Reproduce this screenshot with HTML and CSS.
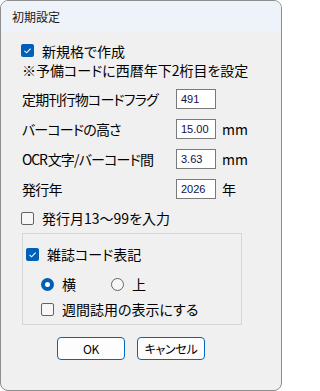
FILE: index.html
```html
<!DOCTYPE html>
<html lang="ja">
<head>
<meta charset="utf-8">
<link rel="stylesheet" href="styles.css">
</head>
<body>
<div class="window">
  <div class="titlebar">初期設定</div>
  <div class="content">
    <div class="row r-new">
      <span class="check on"><svg viewBox="0 0 13 13" width="13" height="13"><path d="M3.5 6.8 L5.6 8.8 L9.6 4.6" fill="none" stroke="#fff" stroke-width="1.1"/></svg></span>
      <span class="lbl">新規格で作成</span>
    </div>
    <div class="row r-note">※予備コードに西暦年下2桁目を設定</div>
    <div class="field first">
      <span class="flabel">定期刊行物コードフラグ</span>
      <span class="input">491</span>
    </div>
    <div class="field">
      <span class="flabel">バーコードの高さ</span>
      <span class="input">15.00</span>
      <span class="unit">mm</span>
    </div>
    <div class="field">
      <span class="flabel"><span class="latin">OCR</span>文字/バーコード間</span>
      <span class="input">3.63</span>
      <span class="unit">mm</span>
    </div>
    <div class="field">
      <span class="flabel">発行年</span>
      <span class="input">2026</span>
      <span class="unit">年</span>
    </div>
    <div class="row r-month">
      <span class="check"></span>
      <span class="lbl">発行月13〜99を入力</span>
    </div>
    <div class="group">
      <div class="row g-head">
        <span class="check on"><svg viewBox="0 0 13 13" width="13" height="13"><path d="M3.5 6.8 L5.6 8.8 L9.6 4.6" fill="none" stroke="#fff" stroke-width="1.1"/></svg></span>
        <span class="lbl">雑誌コード表記</span>
      </div>
      <div class="row g-radio">
        <span class="opt"><span class="radio on"></span><span class="lbl">横</span></span>
        <span class="opt"><span class="radio"></span><span class="lbl">上</span></span>
      </div>
      <div class="row g-week">
        <span class="check"></span>
        <span class="lbl">週間誌用の表示にする</span>
      </div>
    </div>
    <div class="buttons">
      <button class="btn">OK</button>
      <button class="btn">キャンセル</button>
    </div>
  </div>
</div>
</body>
</html>
```

FILE: styles.css
```css
html, body {
  margin: 0;
  padding: 0;
  background: #ffffff;
}
body {
  font-family: "Noto Sans CJK JP", "Noto Sans", sans-serif;
  font-feature-settings: "palt";
  color: #000;
}
.window {
  width: 282px;
  height: 391px;
  box-sizing: border-box;
  border: 1px solid #8e8e8e;
  border-radius: 8px;
  background: #f0f0f0;
  overflow: hidden;
}
.titlebar {
  height: 31px;
  line-height: 31px;
  background: #eef3f9;
  padding-left: 11px;
  font-size: 12px;
  color: #1a1a1a;
}
.content {
  padding-left: 20px;
  display: flex;
  flex-direction: column;
  align-items: flex-start;
}
.row {
  display: flex;
  align-items: center;
  font-size: 14px;
}
.r-new {
  margin-top: 8px;
  height: 21px;
}
.r-note {
  height: 18px;
  padding-left: 1px;
}
.field {
  display: flex;
  align-items: center;
  height: 20px;
  margin-top: 10px;
  font-size: 14px;
}
.field.first {
  margin-top: 10px;
}
.flabel {
  width: 155px;
  padding-left: 1px;
  box-sizing: border-box;
  letter-spacing: -0.8px;
  white-space: nowrap;
}
.latin {
  letter-spacing: -1.2px;
  margin-right: 1px;
}
.input {
  width: 40px;
  height: 20px;
  box-sizing: border-box;
  border: 1px solid #7a7a7a;
  background: #fff;
  font-family: "Liberation Sans", Arial, sans-serif;
  font-size: 11px;
  line-height: 18px;
  padding-left: 4px;
  color: #10104a;
}
.unit {
  margin-left: 6px;
}
.r-month {
  height: 20px;
  margin-top: 9px;
}
.check {
  width: 13px;
  height: 13px;
  box-sizing: border-box;
  border: 1px solid #636363;
  border-radius: 2px;
  background: #f7f7f7;
  margin-right: 8px;
  flex: none;
  display: flex;
}
.check.on {
  border: none;
  background: #005fb8;
}
.group {
  margin-top: 5px;
  margin-left: 1px;
  width: 220px;
  height: 92px;
  box-sizing: border-box;
  border: 1px solid #d6d6d6;
  padding: 10px 0 0 3px;
  display: flex;
  flex-direction: column;
}
.g-head {
  height: 20px;
}
.g-radio {
  height: 20px;
  margin-top: 10px;
  padding-left: 15px;
}
.opt {
  display: flex;
  align-items: center;
  width: 70px;
}
.radio {
  width: 13px;
  height: 13px;
  box-sizing: border-box;
  border: 1px solid #666;
  border-radius: 50%;
  background: #f7f7f7;
  margin-right: 8px;
  flex: none;
}
.radio.on {
  border: 4px solid #005fb8;
  background: #fff;
}
.g-week {
  height: 20px;
  margin-top: 5px;
  padding-left: 15px;
}
.buttons {
  display: flex;
  gap: 12px;
  margin-top: 12px;
  margin-left: 36px;
}
.btn {
  width: 68px;
  height: 23px;
  box-sizing: border-box;
  border: 1px solid #0067c0;
  border-radius: 4px;
  background: #fdfdfd;
  font-family: "Noto Sans CJK JP", sans-serif;
  font-feature-settings: "palt";
  font-size: 12px;
  letter-spacing: -0.3px;
  color: #000;
  padding: 0;
  line-height: 20px;
}
```
